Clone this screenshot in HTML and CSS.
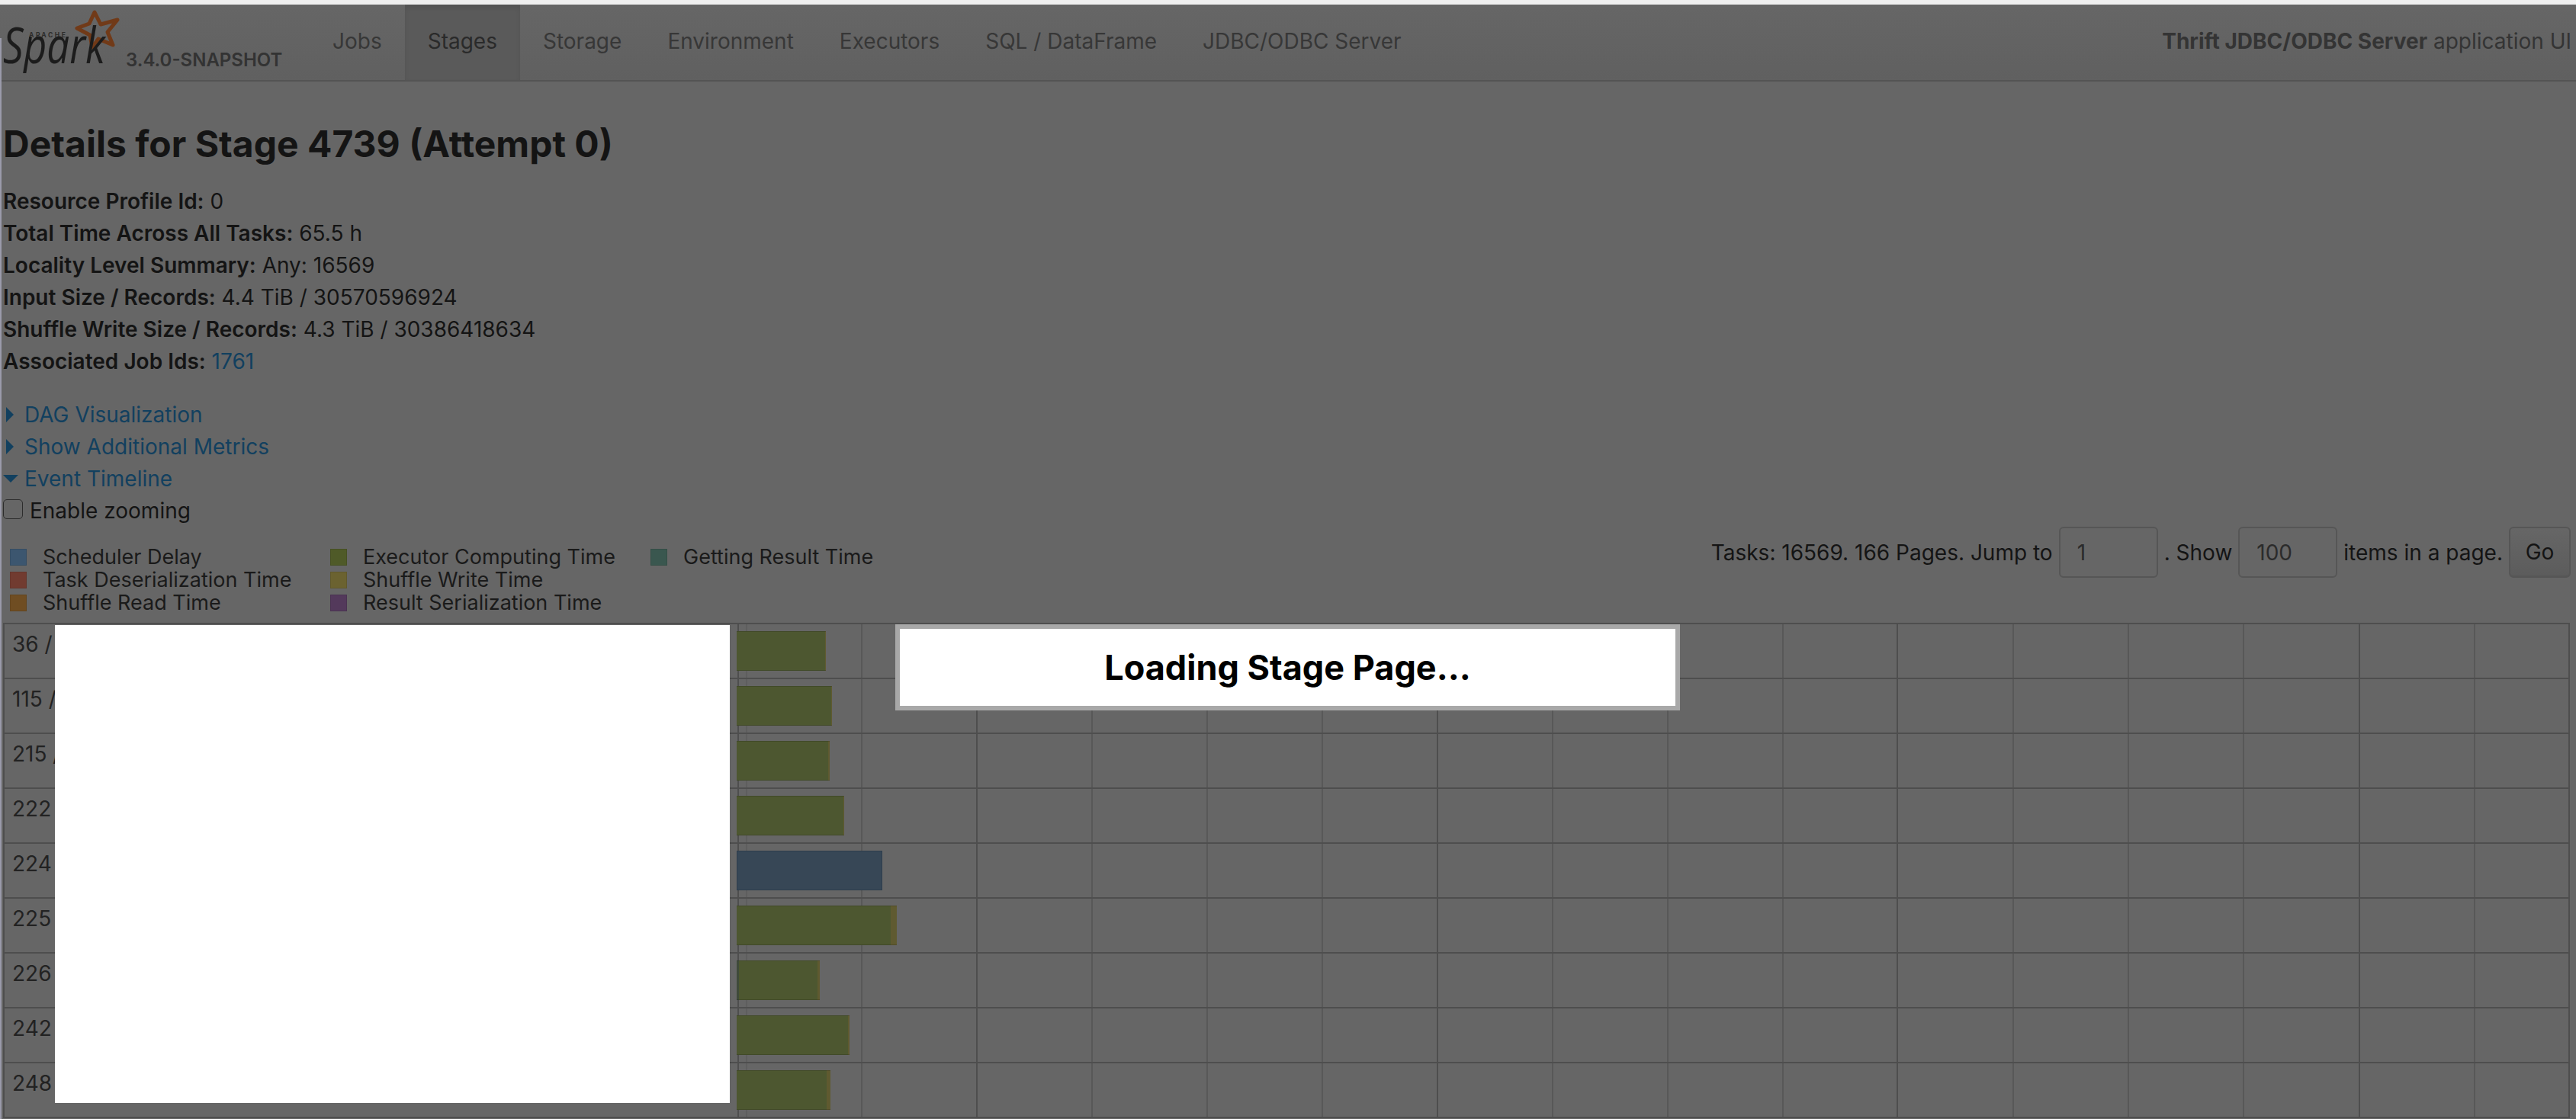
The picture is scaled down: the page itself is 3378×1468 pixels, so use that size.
FILE: index.html
```html
<!DOCTYPE html>
<html lang="en">
<head>
<meta charset="utf-8">
<title>Details for Stage 4739</title>
<link rel="stylesheet" href="styles.css">
</head>
<body>
<div class="edge"></div>
<header class="nav">
  <div class="brand">
    <svg class="logo" width="158" height="92" viewBox="0 0 158 92">
      <path class="star" d="M124 12 L132 28 L154 22 L141 38 L148 55 L129 47 L121 58 L118 42 L101 33 L117 27 Z"/>
      <text class="apache" x="38" y="45">APACHE</text>
      <text class="spark" x="4" y="79" textLength="134" lengthAdjust="spacingAndGlyphs">Spark</text>
    </svg>
    <span class="version">3.4.0-SNAPSHOT</span>
  </div>
  <nav class="tabs">
    <a class="tab">Jobs</a>
    <a class="tab tab-active">Stages</a>
    <a class="tab">Storage</a>
    <a class="tab">Environment</a>
    <a class="tab">Executors</a>
    <a class="tab">SQL / DataFrame</a>
    <a class="tab">JDBC/ODBC Server</a>
  </nav>
  <p class="app"><strong>Thrift JDBC/ODBC Server</strong> application UI</p>
</header>
<main class="page">
  <h3 class="title">Details for Stage 4739 (Attempt 0)</h3>
  <ul class="facts">
    <li><strong>Resource Profile Id:</strong> 0</li>
    <li><strong>Total Time Across All Tasks:</strong> 65.5 h</li>
    <li><strong>Locality Level Summary:</strong> Any: 16569</li>
    <li><strong>Input Size / Records:</strong> 4.4 TiB / 30570596924</li>
    <li><strong>Shuffle Write Size / Records:</strong> 4.3 TiB / 30386418634</li>
    <li><strong>Associated Job Ids:</strong> <a class="link">1761</a></li>
  </ul>
  <div class="toggles">
    <a class="link toggle"><i class="arrow-right"></i>DAG Visualization</a>
    <a class="link toggle"><i class="arrow-right"></i>Show Additional Metrics</a>
    <a class="link toggle"><i class="arrow-down"></i>Event Timeline</a>
    <label class="zoom"><span class="check"></span>Enable zooming</label>
  </div>
  <div class="controls">
    <div class="legend">
      <span class="key"><i class="swatch s-blue"></i>Scheduler Delay</span>
      <span class="key"><i class="swatch s-green"></i>Executor Computing Time</span>
      <span class="key"><i class="swatch s-teal"></i>Getting Result Time</span>
      <span class="key"><i class="swatch s-red"></i>Task Deserialization Time</span>
      <span class="key"><i class="swatch s-yellow"></i>Shuffle Write Time</span>
      <span class="key-empty"></span>
      <span class="key"><i class="swatch s-orange"></i>Shuffle Read Time</span>
      <span class="key"><i class="swatch s-purple"></i>Result Serialization Time</span>
    </div>
    <form class="pager">
      <span>Tasks: 16569. 166 Pages. Jump to</span>
      <span class="field">1</span>
      <span>. Show</span>
      <span class="field">100</span>
      <span>items in a page.</span>
      <span class="go">Go</span>
    </form>
  </div>
  <section class="chart">
    <i class="vline major" style="left:961px"></i>
    <i class="vline faint" style="left:972px"></i>
    <i class="vline" style="left:1123px"></i>
    <i class="vline major" style="left:1274px"></i>
    <i class="vline" style="left:1425px"></i>
    <i class="vline" style="left:1576px"></i>
    <i class="vline" style="left:1727px"></i>
    <i class="vline major" style="left:1878px"></i>
    <i class="vline" style="left:2029px"></i>
    <i class="vline" style="left:2180px"></i>
    <i class="vline" style="left:2331px"></i>
    <i class="vline major" style="left:2481px"></i>
    <i class="vline" style="left:2633px"></i>
    <i class="vline" style="left:2784px"></i>
    <i class="vline" style="left:2935px"></i>
    <i class="vline major" style="left:3087px"></i>
    <i class="vline" style="left:3238px"></i>
    <div class="row"><span class="label">36 /</span><span class="bar"><i class="seg g" style="width:116px"></i><i class="seg y" style="width:1px"></i></span></div>
    <div class="row"><span class="label">115 /</span><span class="bar"><i class="seg g" style="width:124px"></i><i class="seg y" style="width:1px"></i></span></div>
    <div class="row"><span class="label">215 /</span><span class="bar"><i class="seg g" style="width:120px"></i><i class="seg y" style="width:2px"></i></span></div>
    <div class="row"><span class="label">222 /</span><span class="bar"><i class="seg g" style="width:140px"></i><i class="seg y" style="width:1px"></i></span></div>
    <div class="row"><span class="label">224 /</span><span class="bar"><i class="seg b" style="width:191px"></i></span></div>
    <div class="row"><span class="label">225 /</span><span class="bar"><i class="seg g" style="width:202px"></i><i class="seg y" style="width:8px"></i></span></div>
    <div class="row"><span class="label">226 /</span><span class="bar"><i class="seg d" style="width:3px"></i><i class="seg g" style="width:103px"></i><i class="seg y" style="width:3px"></i></span></div>
    <div class="row"><span class="label">242 /</span><span class="bar"><i class="seg g" style="width:146px"></i><i class="seg y" style="width:2px"></i></span></div>
    <div class="row"><span class="label">248 /</span><span class="bar"><i class="seg g" style="width:118px"></i><i class="seg y" style="width:5px"></i></span></div>
    <div class="blank"></div>
  </section>
</main>
<div class="modal">Loading Stage Page...</div>
</body>
</html>
```

FILE: styles.css
```css
html, body { margin: 0; padding: 0; height: 1468px; overflow: hidden; }
body {
  background: #666666;
  border-top: 6px solid #efefef;
  box-sizing: border-box;
  font-family: Inter, "Liberation Sans", sans-serif;
  font-size: 28px;
  line-height: 42px;
  color: #141414;
  position: relative;
}
.edge { position: absolute; left: 0; top: 44px; bottom: 0; width: 2px; background: #9a9aaa; }

.nav {
  display: flex;
  align-items: stretch;
  height: 101px;
  box-sizing: border-box;
  border-bottom: 2px solid #545454;
  background: linear-gradient(#666666, #606060);
  color: #343434;
}
.brand { display: flex; align-items: flex-start; width: 406px; flex: none; }
.logo { flex: none; margin: -2px 0 0 0; }
.star { fill: none; stroke: #713a18; stroke-width: 5; stroke-linejoin: round; }
.apache { font: 700 8.5px Inter, sans-serif; letter-spacing: 2.6px; fill: #2c2c2c; }
.spark { font: italic 400 66px "Open Sans", sans-serif; fill: #1c1c1c; }
.version { font-size: 24px; font-weight: 600; line-height: 30px; margin: 58px 0 0 7px; color: #333; white-space: nowrap; }
.tabs { display: flex; }
.tab { padding: 0 30px; line-height: 96px; color: #373737; white-space: nowrap; }
.tab-active { background: #5a5a5a; color: #2a2a2a; box-shadow: inset 0 4px 6px rgba(0,0,0,.08); }
.app { margin: 0 6px 0 auto; line-height: 96px; white-space: nowrap; }
.app strong { font-weight: 700; }

.page { padding: 0 4px; }
.title { margin: 52px 0 0; font-size: 48px; line-height: 60px; font-weight: 700; color: #141414; }
.facts { list-style: none; margin: 24px 0 0; padding: 0; }
.facts strong { font-weight: 600; }
.link { color: #12405f; }
.toggles { display: flex; flex-direction: column; margin-top: 28px; }
.toggle { display: flex; align-items: center; padding-left: 28px; position: relative; }
.arrow-right { position: absolute; left: 4px; width: 0; height: 0; border-left: 10px solid #12405f; border-top: 10px solid transparent; border-bottom: 10px solid transparent; }
.arrow-down { position: absolute; left: 0; width: 0; height: 0; border-top: 10px solid #12405f; border-left: 10px solid transparent; border-right: 10px solid transparent; }
.zoom { display: flex; align-items: center; }
.check { width: 24px; height: 24px; margin: -4px 9px 0 0; border: 1px solid #2c2c2c; border-radius: 5px; }

.controls { display: flex; justify-content: space-between; align-items: flex-start; height: 124px; margin-top: 2px; }
.legend { display: grid; grid-template-columns: 420px 420px auto; grid-auto-rows: 30px; margin: 23px 0 0 9px; line-height: 30px; font-size: 27px; }
.key { display: flex; align-items: center; white-space: nowrap; color: #1a1a1a; }
.swatch { width: 20px; height: 20px; margin-right: 21px; border: 1px solid rgba(0,0,0,.1); flex: none; }
.s-blue { background: #3c566f; }
.s-green { background: #4f5a28; }
.s-teal { background: #3a574f; }
.s-red { background: #713b30; }
.s-yellow { background: #6b6230; }
.s-orange { background: #6f4d22; }
.s-purple { background: #53395b; }
.pager { display: flex; align-items: center; gap: 8px; margin: -2px 3px 0 0; white-space: nowrap; }
.field { box-sizing: border-box; width: 130px; height: 67px; padding-left: 22px; line-height: 64px; border: 2px solid #565656; border-radius: 6px; color: #2b2b2b; }
.go { box-sizing: border-box; width: 81px; height: 67px; line-height: 62px; text-align: center; border: 2px solid #565656; border-bottom-width: 3px; border-radius: 6px; background: linear-gradient(#666, #5c5c5c); }

.chart {
  position: relative;
  width: 3366px;
  box-sizing: border-box;
  border-top: 2px solid #4e4e4e;
  border-left: 2px solid #4e4e4e;
  border-right: 2px solid #4e4e4e;
}
.vline { position: absolute; top: 0; bottom: 0; width: 2px; background: #585858; }
.vline.major { background: #4e4e4e; }
.vline.faint { background: #5e5e5e; }
.row { position: relative; display: flex; height: 72px; box-sizing: border-box; border-bottom: 2px solid #4e4e4e; }
.label { width: 960px; flex: none; padding-left: 10px; box-sizing: border-box; line-height: 30px; padding-top: 11px; color: #222; }
.bar { display: flex; height: 52px; margin-top: 9px; }
.seg { display: block; height: 100%; box-sizing: border-box; border-top: 1px solid rgba(0,0,0,.15); border-bottom: 1px solid rgba(0,0,0,.15); }
.g { background: #4d5730; }
.y { background: #5f5a30; }
.b { background: #374756; border: 1px solid #2d3d4c; }
.d { background: #3f4a3a; }
.blank { position: absolute; left: 66px; top: 1px; width: 885px; height: 627px; background: #fff; }

.modal {
  position: absolute;
  left: 1174px;
  top: 813px;
  width: 1029px;
  height: 113px;
  box-sizing: border-box;
  border: 6px solid #a8a8a8;
  background: #fff;
  color: #000;
  font-size: 45px;
  font-weight: 700;
  line-height: 101px;
  text-align: center;
}
```
